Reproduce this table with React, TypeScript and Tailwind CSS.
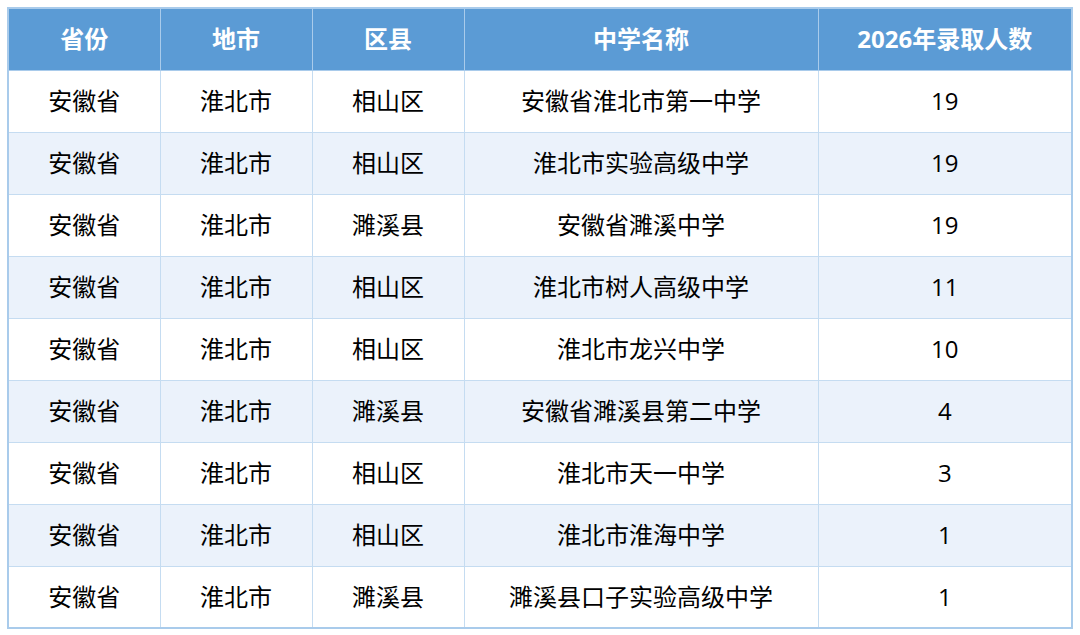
import React from 'react';

const rows = [
  ['安徽省', '淮北市', '相山区', '安徽省淮北市第一中学', '19'],
  ['安徽省', '淮北市', '相山区', '淮北市实验高级中学', '19'],
  ['安徽省', '淮北市', '濉溪县', '安徽省濉溪中学', '19'],
  ['安徽省', '淮北市', '相山区', '淮北市树人高级中学', '11'],
  ['安徽省', '淮北市', '相山区', '淮北市龙兴中学', '10'],
  ['安徽省', '淮北市', '濉溪县', '安徽省濉溪县第二中学', '4'],
  ['安徽省', '淮北市', '相山区', '淮北市天一中学', '3'],
  ['安徽省', '淮北市', '相山区', '淮北市淮海中学', '1'],
  ['安徽省', '淮北市', '濉溪县', '濉溪县口子实验高级中学', '1'],
];

const headers = ['省份', '地市', '区县', '中学名称', '2026年录取人数'];
const widths = ['w-[152px]', 'w-[152px]', 'w-[152px]', 'w-[354px]', 'w-[254px]'];

export default function App() {
  return (
    <div className="w-[1080px] h-[635px] bg-white pt-[7px] pl-[7px] font-['Open_Sans','Noto_Sans_CJK_SC',sans-serif]">
      <table className="border-collapse table-fixed w-[1065px] border-2 border-[#a9cbeb]">
        <thead>
          <tr className="h-[62px] bg-[#5b9bd5]">
            {headers.map((h, i) => (
              <th key={i} className={`${widths[i]} border border-[#a9cbeb] text-white text-[24px] font-bold text-center`}>
                {h}
              </th>
            ))}
          </tr>
        </thead>
        <tbody>
          {rows.map((r, ri) => (
            <tr key={ri} className={`h-[62px] ${ri % 2 === 1 ? 'bg-[#ebf2fb]' : 'bg-white'}`}>
              {r.map((c, ci) => (
                <td key={ci} className="border border-[#c5dcf1] text-black text-[24px] text-center">
                  {c}
                </td>
              ))}
            </tr>
          ))}
        </tbody>
      </table>
    </div>
  );
}
